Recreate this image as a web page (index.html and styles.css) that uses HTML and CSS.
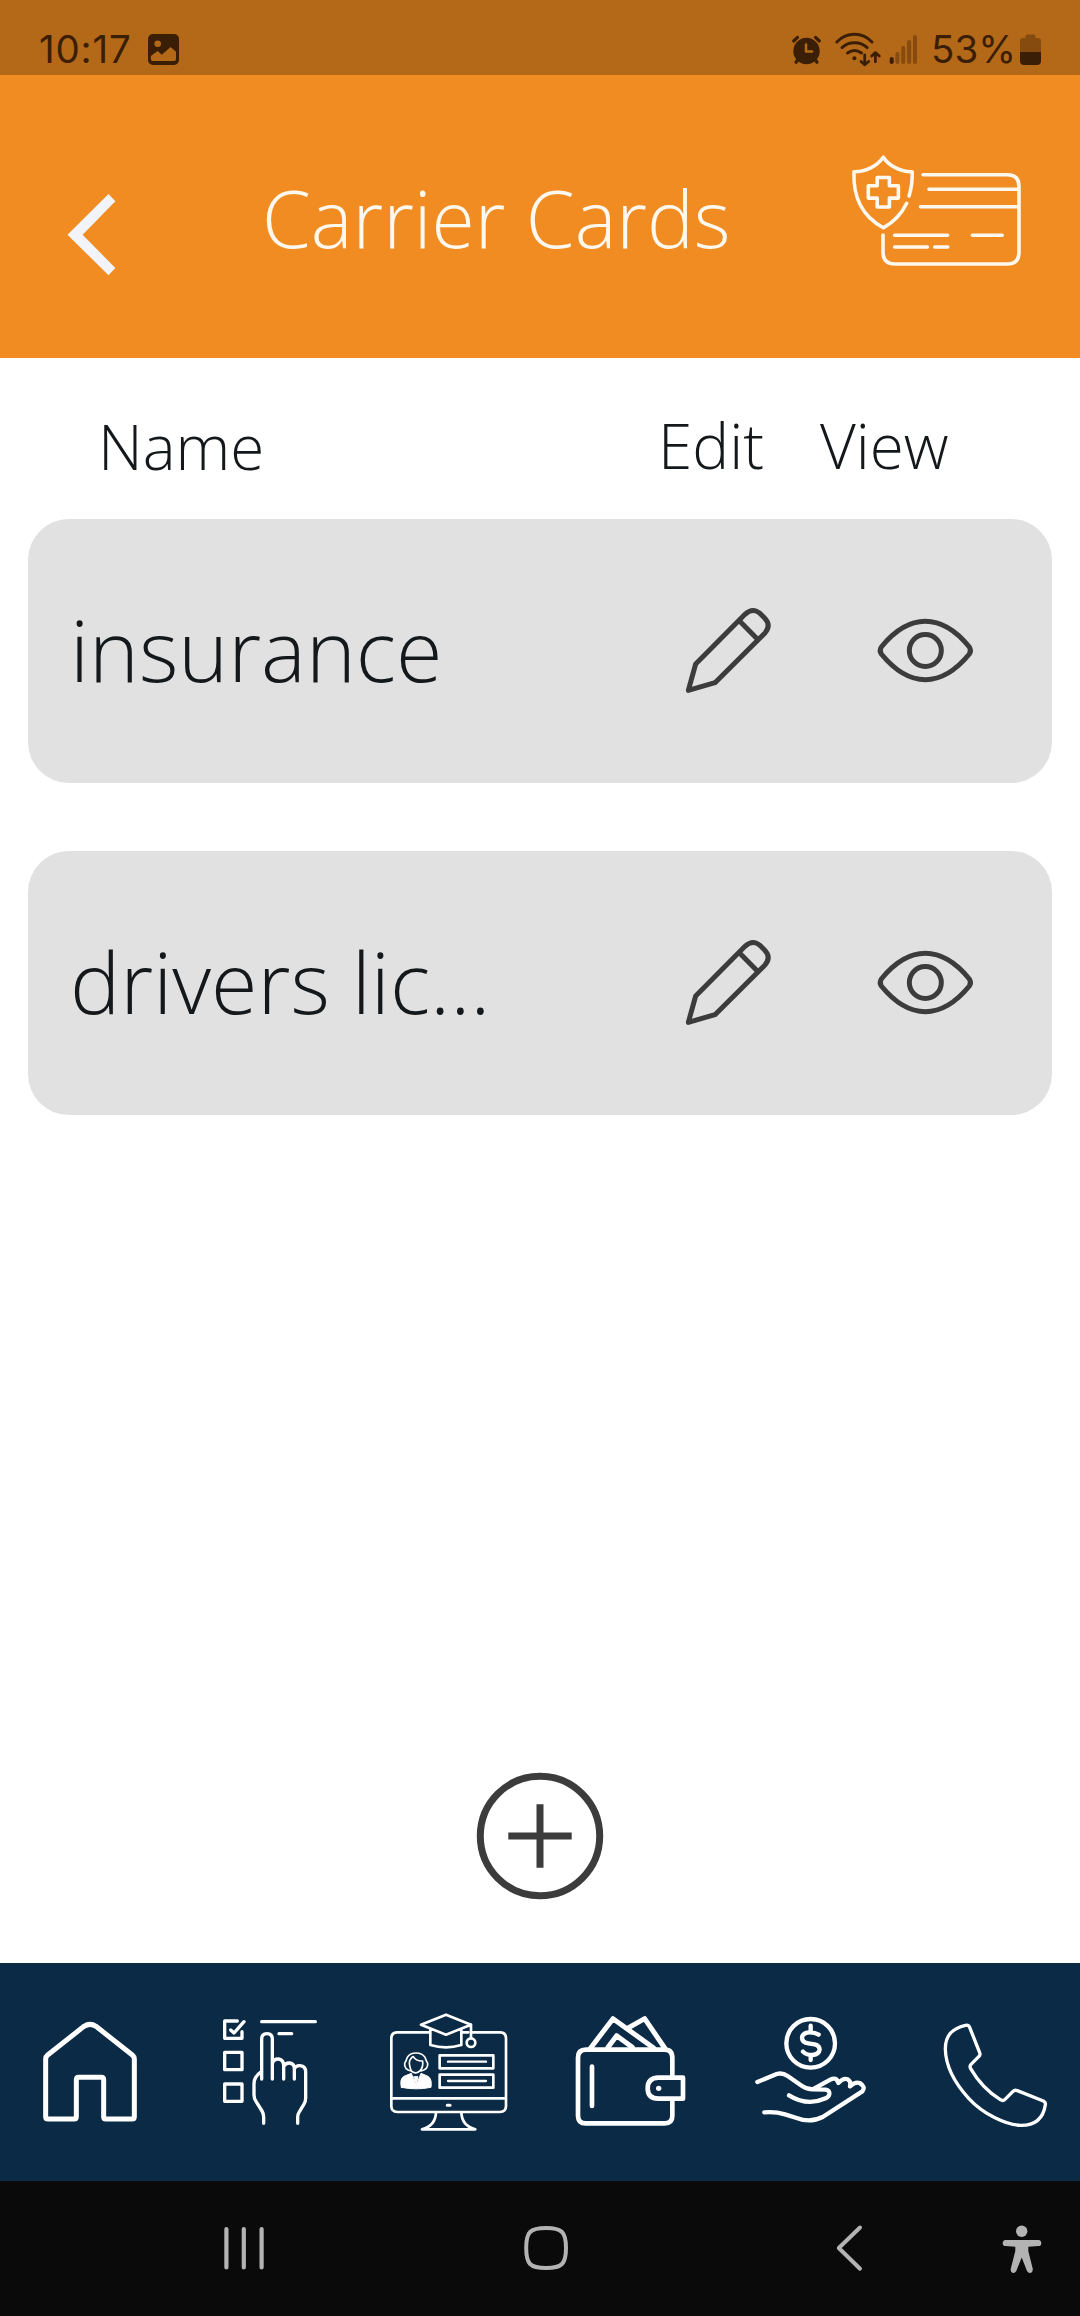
FILE: index.html
```html
<!DOCTYPE html>
<html lang="en">
<head>
<meta charset="utf-8">
<title>Carrier Cards</title>
<link rel="stylesheet" href="styles.css">
</head>
<body>
<div class="status">
  <span class="clock">10:17</span>
  <svg class="picture" viewBox="0 0 31 31"><rect width="31" height="31" rx="5" fill="#3a1e05"/><circle cx="9.7" cy="9.7" r="3.3" fill="#b46918"/><path d="M2.8 22L9.7 17l4.1 3.7L22.5 13 28 17.7V25q0 2-2 2H5q-2.2 0-2.2-2z" fill="#b46918"/></svg>
  <svg class="indicators" viewBox="790 32 130 36" fill="none" stroke="#3a1e05" stroke-linecap="round" stroke-linejoin="round">
    <circle cx="806.5" cy="51" r="13.2" fill="#3a1e05" stroke="none"/>
    <path d="M793.7 41l3.8-3.6M819.3 41l-3.8-3.6M796 62.3l2.5-3.5M817 62.3l-2.5-3.5" stroke-width="3.2"/>
    <path d="M806 44.5v7h6" stroke="#b46918" stroke-width="2.6"/>
    <path d="M836.8 42C847 31.8 862 31.8 872 42M842 47.6C849 41.2 860 41.2 867.2 47.6M847.5 53C852 49.8 857 49.8 861.5 53" stroke-width="3"/>
    <circle cx="854.4" cy="58.3" r="2" fill="#3a1e05" stroke="none"/>
    <path d="M864.7 55v9M861 61.5l3.7 3.2 3.9-3.2M875.4 61.8V53M871.7 56l3.7-3.4 3.9 3.4" stroke-width="2.8"/>
    <path d="M891.7 62v-3" stroke-width="4"/>
    <path d="M897.4 62v-8M903.3 62V48M909.1 62V42M915 62V37" stroke="#864b0e" stroke-width="4"/>
  </svg>
  <span class="percent">53%</span>
  <svg class="battery" viewBox="0 0 21 32"><path d="M0 18V7q0-3 3-3h2.500V2.500q0-2 2-2h6q2 0 2 2V4H18q3 0 3 3v11z" fill="#864b0e"/><path d="M0 18h21v9q0 4-4 4H4q-4 0-4-4z" fill="#3a1e05"/></svg>
</div>
<header class="header">
  <svg class="back" viewBox="67 193 50 84"><path d="M108.500 194l6.900 7.300-32.800 33.400 32.800 33.300-6.900 7.300-41-40.600z" fill="#f2f4fa"/></svg>
  <h1 class="title">Carrier Cards</h1>
  <svg class="card-icon" viewBox="850 152 172 116" fill="none" stroke="#fff8ee" stroke-width="3.600" stroke-linecap="round" stroke-linejoin="round">
    <path d="M909.100 196Q912.600 184 912.200 171.700C901 172 889 166 883.300 157.200C877 166 866 172 853.900 171.700C853 198 862 216 883.300 227.800C894 222 902 213 906.700 203.300"/>
    <path d="M877.200 177.500h12.200v8.200h9v12.400h-9v8.900h-12.200v-8.900h-8.900v-12.400h8.900z"/>
    <path d="M923 174.700h84.500q11.500 0 11.500 12v65.500q0 11.800-11.500 11.800H895q-12 0-12-12v-17M929 189.300h90M920.500 206.700H1019M894.600 235.300h53M972.400 235.300h29.800M894.600 247h32.800M934.800 247h13"/>
  </svg>
</header>
<main class="main">
  <div class="columns">
    <span class="col-name">Name</span>
    <span class="col-edit">Edit</span>
    <span class="col-view">View</span>
  </div>
  <div class="row">
    <span class="row-name">insurance</span>
    <svg class="icon" viewBox="250 640 270 280"><use href="#pencil"/></svg>
    <svg class="icon" viewBox="825 640 300 280"><use href="#eye"/></svg>
  </div>
  <div class="row">
    <span class="row-name">drivers lic...</span>
    <svg class="icon" viewBox="250 640 270 280"><g id="pencil" fill="none" stroke="#3c3c3d" stroke-width="15" stroke-linejoin="round"><path d="M419 688L436 671Q459 649 482 669L494 681Q516 703 496 727L346 876 266 899 288 820z"/><path d="M419 690l54 55"/></g></svg>
    <svg class="icon" viewBox="825 640 300 280"><g id="eye" fill="none" stroke="#3c3c3d" stroke-width="15"><path d="M844 769Q907 692 976 692T1108 769Q1115 780 1108 790Q1045 867 976 867T844 790Q837 780 844 769z"/><circle cx="976" cy="779.500" r="48"/></g></svg>
  </div>
  <svg class="add" viewBox="0 0 128 128" fill="none" stroke="#3c3c3d" stroke-width="7"><circle cx="64" cy="64" r="59.700"/><path d="M32.300 64h63.400M64 32.300v63.400"/></svg>
</main>
<nav class="tabs">
  <svg viewBox="0 195 540 345" stroke-width="15"><path d="M252 229Q270 217 288 229L397 315Q403 320 403 327V500Q403 507 396 507H318Q311 507 311 500V389Q311 382 304 382H236Q229 382 229 389V500Q229 507 222 507H144Q137 507 137 500V327Q137 320 143 315z"/></svg>
  <svg viewBox="540 195 540 345" stroke-width="10">
    <path d="M712 213H674V265H726V245M692 240L702 249 732 215M674 307H726V359H674zM674 402H726V454H674zM785 215H946M837 251H875"/>
    <path d="M785 387V267Q785 251 801 251T817 267V387M817 340Q822 326 836 327Q851 330 851 346V387M851 350Q856 338 869 339Q883 341 883 355V387M883 356Q888 346 900 347Q917 349 917 365V445Q917 456 911 464L897 487Q893 493 893 501V520M785 364Q762 379 762 402V434Q762 445 768 454L786 483Q791 491 791 501V520"/>
  </svg>
  <svg viewBox="0 105 540 345" stroke-width="8">
    <path d="M208 157H112Q94 157 94 175V378Q94 396 112 396H420Q438 396 438 378V175Q438 157 420 157H337M306 157H325M94 355H438"/>
    <path d="M183 134L258 104 333 134 258 164zM211 147V195Q258 209 304 195V147M333 134V174M228 398Q226 438 186 448H346Q306 438 304 398"/>
    <circle cx="333" cy="188" r="13"/>
    <path d="M239 226H400V265H239zM239 284H400V323H239z"/>
    <path d="M264 245H378M264 303H378" stroke-width="7"/><path d="M262 376H270" stroke-width="9"/>
    <path d="M154 273Q132 269 134 250Q139 242 142 232Q149 219 168 219T195 232Q198 242 203 250Q205 268 183 273M154 273Q146 253 149 242Q156 230 160 230Q168 244 188 243Q190 262 181 271Q168 285 154 273" stroke-width="5"/>
    <path d="M124 322Q118 297 132 289L154 280 168 318 183 280 204 289Q217 297 213 322Q168 331 124 322zM162 290H174L168 316z" fill="#fff" stroke-width="3"/>
  </svg>
  <svg viewBox="0 105 540 345" stroke-width="14">
    <path d="M397 284V235Q397 209 375 209H138Q114 209 114 233V407Q114 430 137 430H374Q397 430 397 408V362"/>
    <path d="M429 293H355Q323 294 323 325T355 356H429zM156 260V378"/>
    <path d="M152 204L219 116 341 204M266 143L314 116 374 204M204 202L230 167 277 202" stroke-width="15"/>
    <circle cx="356" cy="325" r="8" fill="#fff" stroke="none"/>
  </svg>
  <svg viewBox="540 105 540 345" stroke-width="13">
    <circle cx="812" cy="190" r="73"/>
    <path d="M812 137V155M812 225V240M836 164Q824 156 806 157Q786 160 786 174Q787 188 805 190L824 193Q839 197 839 209Q837 223 818 225Q799 226 789 215"/>
    <path d="M652 306L710 282Q727 277 743 288L785 317Q802 329 822 328L857 329Q869 331 868 342Q867 350 857 355Q802 380 747 346M822 326L871 299Q889 289 895 309Q910 293 923 298Q934 304 930 319Q946 304 959 309Q978 320 967 334L848 411Q810 430 770 414L735 403Q705 394 673 397"/>
  </svg>
  <svg viewBox="60 195 540 345" stroke-width="10"><path d="M256 226Q265 223 269 232L299 308Q302 315 296 320L273 343Q268 348 272 356Q306 415 361 449Q369 454 375 448L399 424Q404 419 412 422L490 453Q498 457 496 464C490 505 465 526 423 526C380 526 310 493 266 445C225 400 197 350 196 297C196 255 217 236 256 226z"/></svg>
</nav>
<div class="system">
  <svg viewBox="218 2222 52 52" width="52"><path d="M226.400 2229v38.500M243.800 2229v38.500M261.600 2229v38.500" stroke-width="4.200"/></svg>
  <svg viewBox="520 2222 52 52" width="52"><path d="M546 2228C562 2228 566 2232 566 2248S562 2268 546 2268 526.200 2264 526.200 2248 530 2228 546 2228z" stroke-width="4"/></svg>
  <svg viewBox="832 2222 34 52" width="34"><path d="M860 2227.500L838.800 2248 860 2268.700" stroke-width="4"/></svg>
  <svg viewBox="1000 2222 44 52" width="44"><g fill="#b3b3b3" stroke="none"><circle cx="1021.700" cy="2231.300" r="5.700"/><path d="M1005.500 2240H1038.500Q1041.300 2240.300 1041.300 2243.200T1038.500 2246L1028.300 2246.700V2251L1032.800 2269Q1033 2272 1030.500 2273 1028 2273.300 1027 2271L1021.700 2257.500 1016.300 2271Q1015 2273.300 1012.700 2273 1010.300 2272 1010.700 2269L1015.300 2251V2246.700L1005.500 2246Q1002.700 2246 1002.700 2243.200T1005.500 2240z"/></g></svg>
</div>
</body>
</html>
```
FILE: styles.css
```css
* { box-sizing: border-box; }
body {
  margin: 0;
  width: 1080px;
  height: 2316px;
  display: flex;
  flex-direction: column;
  background: #fff;
  color: #14181a;
  font-family: "Open Sans", sans-serif;
  font-weight: 300;
  overflow: hidden;
}
svg { display: block; flex: none; }
span, h1 { white-space: nowrap; }

.status {
  height: 75px;
  padding: 24px 39px 0;
  display: flex;
  align-items: center;
  background: #b46918;
  color: #3a1e05;
  font: 400 38.5px/51px Inter, sans-serif;
}
.clock { width: 109px; letter-spacing: 0.8px; }
.picture { width: 31px; height: 31px; }
.indicators { width: 130px; height: 36px; margin-left: auto; }
.percent { width: 100px; padding-left: 11px; }
.battery { width: 21px; height: 32px; }

.header {
  height: 283px;
  padding: 0 58px 0 67px;
  display: flex;
  background: #f08c22;
  color: #fff8ee;
}
.back { width: 50px; height: 84px; margin-top: 118px; }
.title {
  flex: 1;
  margin: 0;
  padding: 1px 0 0 145px;
  font-size: 78.7px;
  font-weight: 300;
  line-height: 283px;
}
.card-icon { width: 172px; height: 116px; margin-top: 77px; }

.main {
  flex: 1;
  padding: 0 28px;
  display: flex;
  flex-direction: column;
}
.columns {
  height: 161px;
  padding: 15px 0 0 70px;
  display: flex;
  font-size: 62px;
  line-height: 147px;
}
.col-name { width: 560px; }
.col-edit { width: 162px; margin-top: -1px; }
.col-view { margin-top: -1px; }

.row {
  height: 264.3px;
  margin-bottom: 67.7px;
  padding: 0 77px 0 42px;
  display: flex;
  align-items: center;
  border-radius: 41px;
  background: #e1e1e1;
}
.row-name { flex: 1; font-size: 84.5px; line-height: 260px; margin-top: -2px; }
.icon { height: 93.33px; width: 90px; margin-top: -1.4px; }
.icon:last-child { width: 100px; margin-left: 102px; }

.add { width: 128px; height: 128px; margin: auto auto 63px; }

.tabs {
  height: 218px;
  padding-top: 52px;
  display: grid;
  grid-template-columns: repeat(6, 180px);
  background: #0b2a46;
}
.tabs svg {
  width: 180px;
  height: 115px;
  fill: none;
  stroke: #fff;
  stroke-linecap: round;
  stroke-linejoin: round;
  overflow: visible;
}

.system {
  height: 135px;
  padding: 41px 36px 0 218px;
  display: grid;
  grid-template-columns: 302px 312px 168px 44px;
  background: #0a0a0a;
}
.system svg {
  height: 52px;
  fill: none;
  stroke: #b3b3b3;
  stroke-linecap: round;
  stroke-linejoin: round;
}
```
